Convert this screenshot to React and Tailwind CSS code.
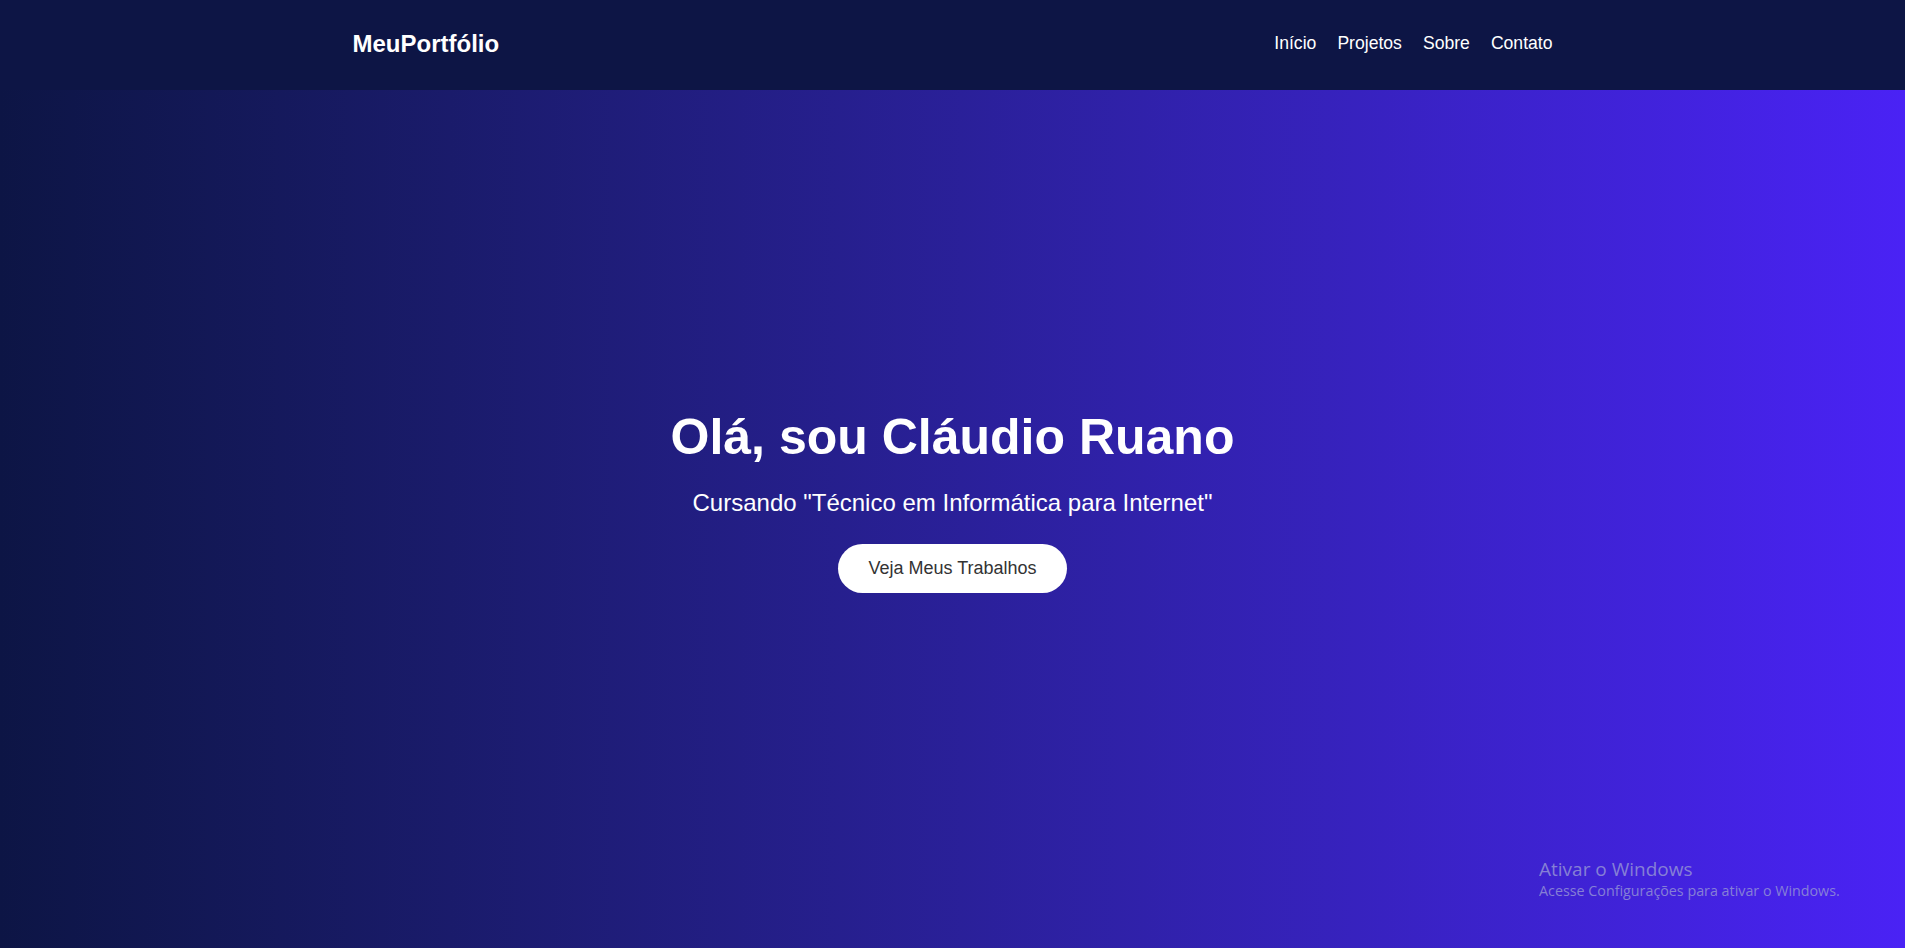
export default function App() {
  const links = ["Início", "Projetos", "Sobre", "Contato"];

  return (
    <div className="min-h-screen flex flex-col font-['Liberation_Sans',Arial,sans-serif] text-white">
      {/* Navbar */}
      <header className="h-[90px] bg-[#0d1545] flex items-center">
        <div className="w-[1200px] mx-auto flex items-center justify-between pb-[2px]">
          <h1 className="text-[24px] font-bold leading-none">MeuPortfólio</h1>
          <nav className="flex items-center gap-[21px] text-[17.6px] leading-none">
            {links.map((link) => (
              <a key={link} href="#" className="hover:underline">
                {link}
              </a>
            ))}
          </nav>
        </div>
      </header>

      {/* Hero */}
      <section className="relative h-[858px] bg-gradient-to-r from-[#0d1545] to-[#4a22f5] flex flex-col items-center justify-center pb-[38px]">
        <h2 className="text-[50px] font-bold leading-[1.2]">Olá, sou Cláudio Ruano</h2>
        <p className="mt-[22px] text-[24px] leading-[1.2]">
          Cursando "Técnico em Informática para Internet"
        </p>
        <button className="mt-[27px] h-[49px] px-[30px] rounded-full bg-white text-[#333] text-[18px]">
          Veja Meus Trabalhos
        </button>

        {/* Windows watermark */}
        <div className="absolute left-[1539px] top-[767px] font-['Open_Sans','Noto_Sans',sans-serif] text-[#8e8ad6] opacity-90 pointer-events-none">
          <p className="text-[19px] leading-[24px]">Ativar o Windows</p>
          <p className="text-[14.3px] leading-[20px]">Acesse Configurações para ativar o Windows.</p>
        </div>
      </section>
    </div>
  );
}
